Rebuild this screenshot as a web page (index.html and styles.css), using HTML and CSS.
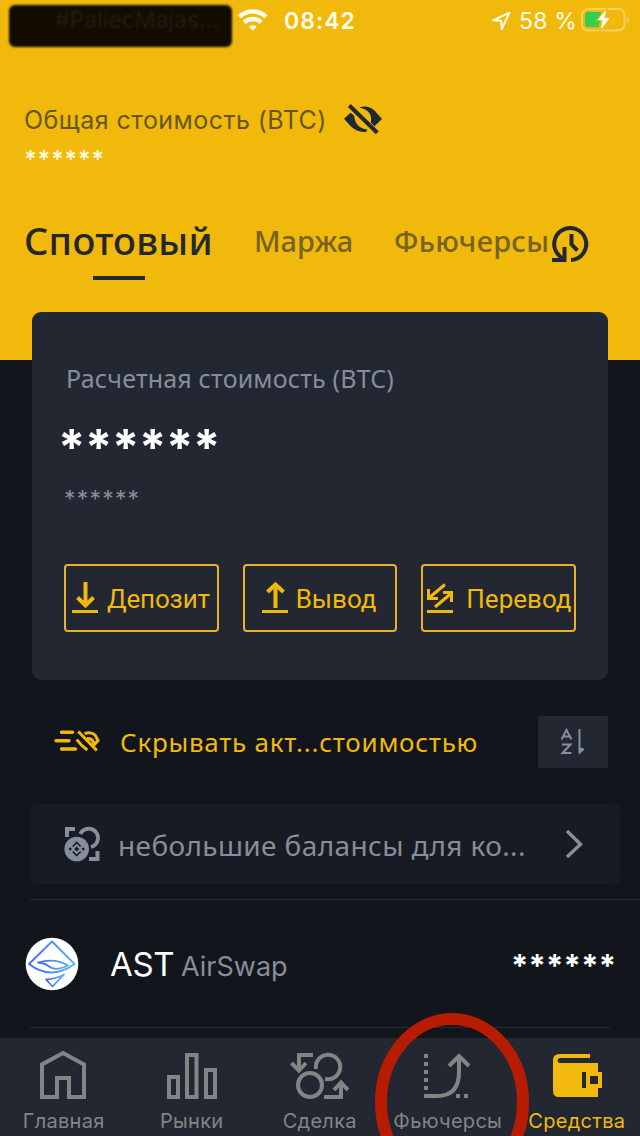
FILE: index.html
```html
<!DOCTYPE html>
<html lang="ru">
<head>
<meta charset="utf-8">
<title>Средства</title>
<link rel="stylesheet" href="styles.css">
</head>
<body>
<div class="app">
  <header class="top">
    <div class="status">
      <div class="carrier"><span>#PaliecMajas...</span></div>
      <svg class="wifi" width="30" height="22" viewBox="238 9 30 22" fill="none" stroke="#fffef0" stroke-width="4.4"><path d="M239.500 16.800a19 19 0 0 1 26.500 0"/><path d="M244.300 22.400a12.200 12.200 0 0 1 17 0"/><path d="M252.700 30.800l-4-4.100a6 6 0 0 1 8 0z" fill="#fffef0" stroke="none"/></svg>
      <span class="time">08:42</span>
      <svg class="loc" width="20" height="20" viewBox="491 11 20 20" fill="none" stroke="#fffef0" stroke-width="2" stroke-linejoin="round"><path d="M509.400 12.700L493 20.300l8.200.500.600 8.200z"/></svg>
      <span class="pct">58 %</span>
      <svg class="batt" width="50" height="26" viewBox="580 7 50 26"><rect x="582" y="9" width="42.500" height="21.500" rx="6" fill="none" stroke="#f6d060" stroke-width="2"/><path d="M627 16q2 1 2 3.500t-2 3.500z" fill="#f6d060"/><path d="M587 12h14l-2 15h-12q-2-.500-2-3v-9q0-2.500 2-3z" fill="#33cf52"/><path d="M607 8L596.500 20.500h5.500L600 31.500l10.500-14h-5.500z" fill="#fff" stroke="#f0b90b" stroke-width="1"/></svg>
    </div>
    <div class="total">
      <span class="total-label">Общая стоимость (BTC)</span>
      <svg width="40" height="32" viewBox="343 103 40 32"><path fill="#212833" d="M344 118.800L350.500 112.800L354.200 115.500Q355 128 367.200 129.500L366.500 131.800Q357 133 350 125.500zM359.300 107.500Q367.500 104.500 374.500 110.500L382 119L374.500 126.200L370.800 122.500Q373 110.500 359.300 107.500z"/><path d="M349.300 105.500l28 27.300" stroke="#212833" stroke-width="4"/></svg>
    </div>
    <div class="total-stars">******</div>
    <nav class="tabs">
      <span class="tab active">Спотовый</span>
      <span class="tab margin-tab">Маржа</span>
      <span class="tab futures-tab">Фьючерсы</span>
      <svg width="40" height="38" viewBox="551 225 40 38" fill="none" stroke="#212833" stroke-width="4"><path d="M571 260a16 16 0 1 0-12.700-5.300l4.200 4.300"/><path d="M564.500 247v13H552"/><path d="M571.500 234v10.500l6 6"/></svg>
    </nav>
  </header>

  <section class="card">
    <div class="card-label">Расчетная стоимость (BTC)</div>
    <div class="card-stars">******</div>
    <div class="card-sub">******</div>
    <div class="actions">
      <div class="btn deposit"><svg width="26" height="33" viewBox="72 581 26 33" fill="none" stroke="#f0b90b"><path stroke-width="4" d="M85.500 582v22M77.500 597.500l8 8 8-8"/><path stroke-width="3" d="M72 611.500h26"/></svg><span>Депозит</span></div>
      <div class="btn withdraw"><svg width="26" height="33" viewBox="262 581 26 33" fill="none" stroke="#f0b90b"><path stroke-width="4" d="M275.500 608v-22M267.500 592l8-7.500 8 7.500"/><path stroke-width="3" d="M262 611.500h26"/></svg><span>Вывод</span></div>
      <div class="btn transfer"><svg width="26" height="33" viewBox="427 581 26 33" fill="none" stroke="#f0b90b" stroke-width="3"><path d="M445 584.500l-15.500 13M428.500 589v9.500h9.500M435 607l15.500-13M443 592.500h8.500v9.500M427 611.500h26"/></svg><span>Перевод</span></div>
    </div>
  </section>

  <div class="filter">
    <svg width="47" height="24" viewBox="54 729 47 24" fill="none" stroke="#f0b90b" stroke-width="3.400" stroke-linecap="round"><path d="M61.500 732.300h11M56 740.700h13M61.500 749h14"/><path stroke-linecap="butt" stroke-width="3" d="M78.300 731.500l18.500 19M84.500 733.500q7-2 10.500 1.500l3 5.500-4.500 5M76.800 739.500q4 6 10.500 10.500M87 738.500q6-.500 6.500 5"/></svg>
    <span>Скрывать акт...стоимостью</span>
    <div class="sort"><svg width="26" height="28" viewBox="560 728 26 28" fill="none" stroke="#848e9c" stroke-width="2"><path d="M561.500 739.500l5-9.500 5 9.500M563.500 736.500h6M562 744.500h8.500l-8 8.500h9M579.500 729v24"/><path fill="#848e9c" stroke="none" d="M579 747.500l5 1v1.500l-5 4.500z"/></svg></div>
  </div>

  <div class="convert">
    <svg class="coins" width="36" height="36" viewBox="64 826 36 36" fill="none" stroke="#848e9c" stroke-width="4"><path d="M67 837v-8h8M97.500 851v8h-8.500"/><path d="M80.300 834a9.300 9.300 0 1 1 10.700 13" stroke-width="3.800"/><circle cx="76.700" cy="849" r="12.300" fill="#848e9c" stroke="none"/><path stroke="#181b23" stroke-width="1.600" d="M72.700 846.500l4-4 4 4M72.700 851.500l4 4 4-4"/><path fill="#181b23" stroke="none" d="M76.700 846.500l2.500 2.500-2.500 2.500-2.500-2.500zM70.200 847.300l1.700 1.700-1.700 1.700-1.700-1.700zM83.200 847.300l1.700 1.700-1.700 1.700-1.700-1.700z"/></svg>
    <span>небольшие балансы для ко...</span>
    <svg class="chev" width="20" height="30" viewBox="564 829 20 30" fill="none" stroke="#848e9c" stroke-width="3.400"><path d="M567 831l13.500 13.300-13.500 12.700"/></svg>
  </div>

  <div class="asset">
    <svg width="54" height="54" viewBox="25 937 54 54"><defs><linearGradient id="air" x1="0" x2="1"><stop offset="0" stop-color="#4268f5"/><stop offset="1" stop-color="#58b4f0"/></linearGradient></defs><circle cx="52" cy="964" r="26.300" fill="#fff"/><g fill="none" stroke="url(#air)" stroke-width="1.800" stroke-linejoin="round"><path d="M52 941.500L29 964q22 17 45.500 0z"/><path d="M38 962.500q17-5 30 3-13 6-19 1-3-3-11-4z"/><path d="M46 979.500q10-.500 18-5l-11.500 12z"/></g></svg>
    <span class="sym">AST</span><span class="name">AirSwap</span><span class="amount">******</span>
  </div>

  <footer class="nav">
    <div class="item"><svg width="54" height="50" viewBox="36 1050 54 50" fill="none" stroke="#848484" stroke-width="4"><path d="M42 1097v-32.500l21-11.500 21 11.500V1097H69v-19H57v19z"/></svg><span>Главная</span></div>
    <div class="item"><svg width="54" height="50" viewBox="164 1050 54 50" fill="none" stroke="#848484" stroke-width="4"><path d="M169 1077h9v20h-9zM187 1055h9.500v42H187zM206 1070h9v27h-9z"/></svg><span>Рынки</span></div>
    <div class="item"><svg width="60" height="50" viewBox="289 1050 60 50" fill="none" stroke="#848484" stroke-width="4"><path d="M313 1055h-14v14M291.500 1063l7.500 7.500 7-7.500M324 1097h17v-14M334 1090l7-7.500 7 7.500"/><circle cx="310" cy="1085" r="12"/><path d="M316 1069a12.200 12.200 0 1 1 9 9.800"/></svg><span>Сделка</span></div>
    <div class="item"><svg width="54" height="50" viewBox="420 1050 54 50" fill="none" stroke="#848484" stroke-width="4"><path stroke-dasharray="4 4" d="M426 1054v37M456 1096h4M464 1096h4"/><path d="M424 1096h13q22 0 22-24v-15M449 1066l10-10 10 10"/></svg><span>Фьючерсы</span></div>
    <div class="item on"><svg width="54" height="50" viewBox="549 1050 54 50"><path fill="#f0b90b" fill-rule="evenodd" d="M560 1054h30v4h-30q-2.500.300-2.500 2.500t2.500 2.500h38v9h4v16h-4v9h-39q-6 0-6-6v-31q0-6 7-6zM582 1072h4v16h-4zM590 1076h8v8h-8z"/></svg><span>Средства</span></div>
    <svg class="ring" width="160" height="128" viewBox="372 1008 160 128"><ellipse cx="452" cy="1102" rx="71" ry="83" fill="none" stroke="#b71c00" stroke-width="12"/></svg>
  </footer>
</div>
</body>
</html>
```
FILE: styles.css
```css
* { box-sizing: border-box; }
body { margin: 0; background: #12151c; font-family: Inter, "Noto Sans", sans-serif; }
svg { display: block; flex: none; }
span { white-space: nowrap; }
.app { width: 640px; height: 1136px; overflow: hidden; display: flex; flex-direction: column; background: #12151c; }
.top { height: 360px; flex: none; background: #f0b90b; }
.status { height: 48px; display: flex; align-items: flex-start; color: #fffef0; padding-left: 9px; }
.carrier { width: 223px; height: 42px; margin-top: 5px; background: #110b00; border-radius: 6px; filter: blur(1px); color: #241e16; font-size: 23px; line-height: 30px; padding-left: 46px; }
.wifi { margin: 9px 0 0 6px; }
.time { width: 72px; margin-left: 16px; font-size: 23px; line-height: 42px; font-weight: 600; letter-spacing: 1px; }
.loc { margin: 11px 0 0 135px; }
.pct { width: 60px; margin-left: 8px; font-size: 23px; line-height: 42px; letter-spacing: .2px; }
.batt { margin: 7px 0 0 1px; }
.total { height: 32px; margin: 55px 0 0 24px; display: flex; }
.total-label { width: 319px; font-size: 25px; line-height: 34px; color: #675717; letter-spacing: .44px; }
.total-stars { margin: 9px 0 0 24px; height: 31px; font-size: 24px; line-height: 32px; color: #fff8dc; letter-spacing: .5px; font-weight: 600; }
.tabs { display: flex; height: 70px; margin: 42px 0 0 24px; font-family: "Noto Sans", sans-serif; font-weight: 500; }
.tab { font-size: 29px; line-height: 48px; color: #77631b; }
.active { width: 189px; height: 63px; font-size: 38px; line-height: 47px; letter-spacing: .25px; color: #24282c; background: linear-gradient(#212833, #212833) 69px 59px / 52px 4px no-repeat; }
.margin-tab { margin-left: 41px; width: 99px; }
.futures-tab { margin-left: 41px; width: 157px; letter-spacing: .3px; }
.tabs svg { margin-top: 8px; }
.card { height: 368px; flex: none; margin: -48px 32px 0; padding: 50px 32px 0; background: #222731; border-radius: 9px; font-family: "Noto Sans", sans-serif; }
.card-label { height: 34px; font-size: 25px; line-height: 32px; color: #848e9c; padding-left: 2px; letter-spacing: .18px; }
.card-stars { margin: 17px 0 0 -6px; height: 56px; font-size: 49px; line-height: 69px; font-family: Inter, sans-serif; font-weight: 700; letter-spacing: -.4px; color: #fff; }
.card-sub { margin-top: 11px; height: 32px; font-size: 23px; line-height: 38px; font-family: Inter, sans-serif; letter-spacing: 1.200px; color: #848e9c; }
.actions { display: flex; gap: 24px; margin-top: 52px; }
.btn { width: 154.670px; height: 68px; border: 2px solid #e8b32a; border-radius: 4px; display: flex; color: #f0b90b; font-family: Roboto, sans-serif; font-size: 26px; line-height: 67px; }
.btn svg { margin-top: 15px; }
.deposit { padding-left: 6px; letter-spacing: -.15px; }
.deposit span { margin-left: 9px; }
.withdraw { padding-left: 17px; }
.withdraw span { margin-left: 8px; }
.transfer { padding-left: 4px; }
.transfer span { margin-left: 13px; }
.filter { height: 52px; flex: none; margin: 36px 32px 0 54px; display: flex; font-family: "Noto Sans", sans-serif; font-size: 26px; line-height: 53px; letter-spacing: .74px; color: #f0b90b; }
.filter > svg { margin-top: 13px; }
.filter span { margin-left: 19px; width: 365px; }
.sort { width: 70px; height: 52px; margin-left: auto; padding: 12px 0 0 22px; background: #222731; border-radius: 1px; }
.convert { height: 80px; flex: none; margin: 36px 20px 0 30px; background: #181b23; border-radius: 6px; display: flex; font-family: "Noto Sans", sans-serif; font-size: 28px; line-height: 83px; letter-spacing: .38px; color: #848e9c; }
.coins { margin: 22px 0 0 34px; }
.convert span { width: 446px; margin-left: 18px; }
.chev { margin-top: 25px; }
.asset { height: 129px; flex: none; margin: 15px 0 0 25px; padding: 0; display: flex; background: linear-gradient(#262a32, #262a32) 5px 0 / 610px 1px no-repeat, linear-gradient(#262a32, #262a32) 5px 128px / 580px 1px no-repeat; }
.asset svg { margin-top: 38px; }
.sym { width: 70px; margin-left: 31px; font-size: 33px; line-height: 130px; letter-spacing: -.3px; color: #fff; }
.name { width: 330px; margin-left: 1px; font-size: 27px; line-height: 136px; color: #848e9c; }
.amount { font-size: 31px; line-height: 134px; font-weight: 700; color: #fff; letter-spacing: .2px; }
.nav { position: relative; height: 98px; margin-top: 10px; flex: none; background: #222731; display: grid; grid-template-columns: repeat(5, 128px); }
.item { display: flex; flex-direction: column; align-items: center; width: 126px; padding-top: 12px; color: #848484; font-size: 20px; line-height: 42px; }
.on { color: #f0b90b; width: 128px; }
.item span { letter-spacing: .3px; padding-left: 1.500px; }
.ring { position: absolute; left: 372px; bottom: 0; }
```
